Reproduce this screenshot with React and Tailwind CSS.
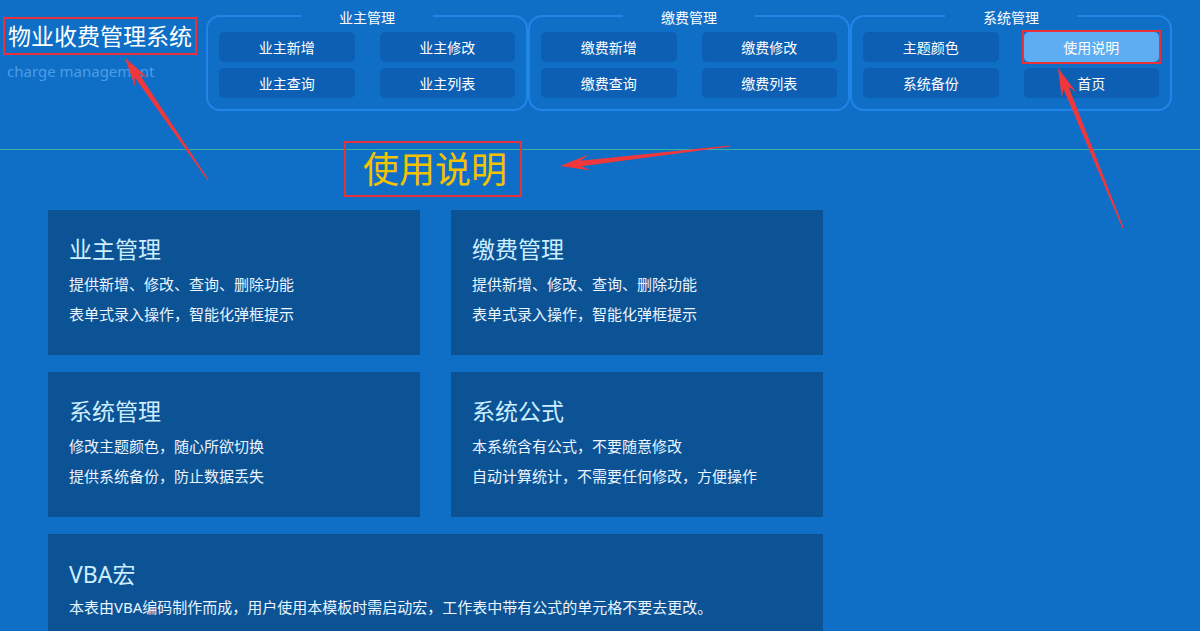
import React from 'react';

const groups = [
  { title: '业主管理', items: ['业主新增', '业主修改', '业主查询', '业主列表'] },
  { title: '缴费管理', items: ['缴费新增', '缴费修改', '缴费查询', '缴费列表'] },
  { title: '系统管理', items: ['主题颜色', '使用说明', '系统备份', '首页'] },
];

const cards = [
  { title: '业主管理', lines: ['提供新增、修改、查询、删除功能', '表单式录入操作，智能化弹框提示'] },
  { title: '缴费管理', lines: ['提供新增、修改、查询、删除功能', '表单式录入操作，智能化弹框提示'] },
  { title: '系统管理', lines: ['修改主题颜色，随心所欲切换', '提供系统备份，防止数据丢失'] },
  { title: '系统公式', lines: ['本系统含有公式，不要随意修改', '自动计算统计，不需要任何修改，方便操作'] },
];

// annotation arrow: tapered shaft + swept-back head
function arrowPoints(tx, ty, px, py) {
  const len = Math.hypot(px - tx, py - ty);
  const dx = (px - tx) / len;
  const dy = (py - ty) / len;
  const nx = -dy;
  const ny = dx;
  const L = 30;
  const bx = px - dx * L * 0.7;
  const by = py - dy * L * 0.7;
  const hx = px - dx * L;
  const hy = py - dy * L;
  const pts = [
    [tx + nx * 0.6, ty + ny * 0.6],
    [bx + nx * 2.8, by + ny * 2.8],
    [hx + nx * 8, hy + ny * 8],
    [px, py],
    [hx - nx * 8, hy - ny * 8],
    [bx - nx * 2.8, by - ny * 2.8],
    [tx - nx * 0.6, ty - ny * 0.6],
  ];
  return pts.map((p) => p.map((v) => v.toFixed(1)).join(',')).join(' ');
}

const Group = ({ group }) => (
  <fieldset className="self-start w-[322px] border-2 border-[#1f86e8] rounded-[14px] px-[11px] pb-[11px]">
    <legend className="mx-auto px-[38px] text-[14px] leading-[20px] text-white">
      <span className="relative top-[2px]">{group.title}</span>
    </legend>
    <div className="grid grid-cols-2 gap-x-[25px] gap-y-[6px] pt-[6px]">
      {group.items.map((item) => (
        <div
          key={item}
          className={`relative h-[30px] rounded-[5px] flex items-center justify-center text-[14px] text-white ${
            item === '使用说明' ? 'bg-[#5eacf2]' : 'bg-[#0c5fb2]'
          }`}
        >
          {item}
          {item === '使用说明' && (
            <div className="absolute -inset-[2px] border-2 border-[#e8323a]" />
          )}
        </div>
      ))}
    </div>
  </fieldset>
);

const Card = ({ card, wide }) => (
  <div className={`bg-[#0c5396] px-[21px] ${wide ? 'col-span-2 h-[110px] pt-[25px]' : 'h-[145px] pt-[24px]'}`}>
    <div className="text-[23px] leading-[30px] text-[#cdeeff]">{card.title}</div>
    <div className={wide ? 'mt-[3px]' : 'mt-[5px]'}>
      {card.lines.map((line) => (
        <div key={line} className="text-[15px] leading-[30px] text-[#eaf5ff]">{line}</div>
      ))}
    </div>
  </div>
);

export default function App() {
  return (
    <div className="relative w-[1200px] h-[631px] overflow-hidden bg-[#0f6fc6] font-['Noto_Sans','Noto_Sans_CJK_SC',sans-serif]">
      {/* header */}
      <div className="flex h-[150px] pt-[6px] border-b border-[#35b59f]">
        <div className="w-[206px] pl-[3px] pt-[11px]">
          <div className="inline-block border-2 border-[#e8323a] px-[3px] text-[23px] leading-[34px] text-white">
            物业收费管理系统
          </div>
          <div className="pl-[4px] mt-[6px] text-[15px] leading-[20px] text-[#4b9de6]">charge management</div>
        </div>
        {groups.map((g) => (
          <Group key={g.title} group={g} />
        ))}
      </div>

      {/* page title */}
      <div className="pl-[363px]">
        <div className="relative inline-block text-[36px] leading-[40px] text-[#f5c200]">
          使用说明
          <div className="absolute -left-[19px] -right-[15px] -top-[9px] -bottom-[7px] border-2 border-[#e8323a]" />
        </div>
      </div>

      {/* cards */}
      <div className="mt-[20px] ml-[48px] grid grid-cols-[372px_372px] gap-x-[31px] gap-y-[17px]">
        {cards.map((c) => (
          <Card key={c.title} card={c} />
        ))}
        <Card
          wide
          card={{
            title: 'VBA宏',
            lines: ['本表由VBA编码制作而成，用户使用本模板时需启动宏，工作表中带有公式的单元格不要去更改。'],
          }}
        />
      </div>

      {/* annotation arrows */}
      <svg className="absolute inset-0 pointer-events-none" width="1200" height="631" viewBox="0 0 1200 631">
        <polygon points={arrowPoints(208, 180, 125, 58)} fill="#f0383c" />
        <polygon points={arrowPoints(730, 146, 560, 166)} fill="#f0383c" />
        <polygon points={arrowPoints(1123, 228, 1058, 68)} fill="#f0383c" />
      </svg>
    </div>
  );
}
